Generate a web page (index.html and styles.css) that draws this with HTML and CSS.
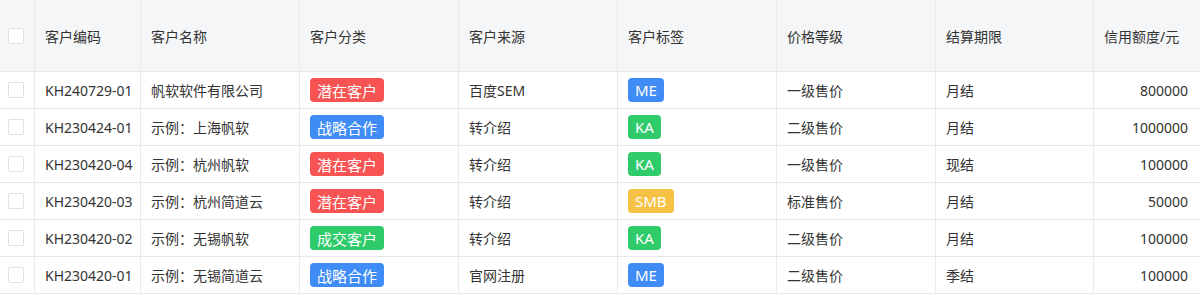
FILE: index.html
```html
<!DOCTYPE html>
<html lang="zh-CN">
<head>
<meta charset="utf-8">
<title>客户列表</title>
<link rel="stylesheet" href="styles.css">
</head>
<body>
<div class="table">
  <div class="row head">
    <div class="cell check"><span class="box"></span></div>
    <div class="cell">客户编码</div>
    <div class="cell">客户名称</div>
    <div class="cell">客户分类</div>
    <div class="cell">客户来源</div>
    <div class="cell">客户标签</div>
    <div class="cell">价格等级</div>
    <div class="cell">结算期限</div>
    <div class="cell num">信用额度/元</div>
  </div>
  <div class="row">
    <div class="cell check"><span class="box"></span></div>
    <div class="cell">KH240729-01</div>
    <div class="cell">帆软软件有限公司</div>
    <div class="cell"><span class="tag red">潜在客户</span></div>
    <div class="cell">百度SEM</div>
    <div class="cell"><span class="tag blue">ME</span></div>
    <div class="cell">一级售价</div>
    <div class="cell">月结</div>
    <div class="cell num right">800000</div>
  </div>
  <div class="row">
    <div class="cell check"><span class="box"></span></div>
    <div class="cell">KH230424-01</div>
    <div class="cell">示例：上海帆软</div>
    <div class="cell"><span class="tag blue">战略合作</span></div>
    <div class="cell">转介绍</div>
    <div class="cell"><span class="tag green">KA</span></div>
    <div class="cell">二级售价</div>
    <div class="cell">月结</div>
    <div class="cell num right">1000000</div>
  </div>
  <div class="row">
    <div class="cell check"><span class="box"></span></div>
    <div class="cell">KH230420-04</div>
    <div class="cell">示例：杭州帆软</div>
    <div class="cell"><span class="tag red">潜在客户</span></div>
    <div class="cell">转介绍</div>
    <div class="cell"><span class="tag green">KA</span></div>
    <div class="cell">一级售价</div>
    <div class="cell">现结</div>
    <div class="cell num right">100000</div>
  </div>
  <div class="row">
    <div class="cell check"><span class="box"></span></div>
    <div class="cell">KH230420-03</div>
    <div class="cell">示例：杭州简道云</div>
    <div class="cell"><span class="tag red">潜在客户</span></div>
    <div class="cell">转介绍</div>
    <div class="cell"><span class="tag yellow">SMB</span></div>
    <div class="cell">标准售价</div>
    <div class="cell">月结</div>
    <div class="cell num right">50000</div>
  </div>
  <div class="row">
    <div class="cell check"><span class="box"></span></div>
    <div class="cell">KH230420-02</div>
    <div class="cell">示例：无锡帆软</div>
    <div class="cell"><span class="tag green">成交客户</span></div>
    <div class="cell">转介绍</div>
    <div class="cell"><span class="tag green">KA</span></div>
    <div class="cell">二级售价</div>
    <div class="cell">月结</div>
    <div class="cell num right">100000</div>
  </div>
  <div class="row">
    <div class="cell check"><span class="box"></span></div>
    <div class="cell">KH230420-01</div>
    <div class="cell">示例：无锡简道云</div>
    <div class="cell"><span class="tag blue">战略合作</span></div>
    <div class="cell">官网注册</div>
    <div class="cell"><span class="tag blue">ME</span></div>
    <div class="cell">二级售价</div>
    <div class="cell">季结</div>
    <div class="cell num right">100000</div>
  </div>
</div>
</body>
</html>
```

FILE: styles.css
```css
html, body {
  margin: 0;
  padding: 0;
  background: #ffffff;
}
body {
  font-family: "Noto Sans", "Noto Sans CJK SC", sans-serif;
  font-size: 14px;
  color: #333333;
}
.table {
  width: 1200px;
}
.row {
  display: grid;
  grid-template-columns: 35px 106px 159px 159px 159px 159px 159px 158px 106px;
  height: 37px;
  border-bottom: 1px solid #e8e9eb;
  box-sizing: border-box;
}
.row.head {
  height: 72px;
  background: #f5f6f8;
}
.cell {
  display: flex;
  align-items: center;
  padding: 0 10px;
  border-right: 1px solid #e8e9eb;
  box-sizing: border-box;
  white-space: nowrap;
  overflow: hidden;
}
.cell:last-child {
  border-right: none;
}
.cell.check {
  padding: 0 0 0 8px;
}
.cell.right {
  justify-content: flex-end;
  padding-right: 12px;
}
.box {
  width: 16px;
  height: 16px;
  box-sizing: border-box;
  border: 1px solid #dfe1e5;
  border-radius: 2px;
  background: #ffffff;
}
.tag {
  display: inline-flex;
  align-items: center;
  height: 24px;
  padding: 0 7px;
  border-radius: 4px;
  color: #ffffff;
  font-size: 15px;
}
.tag.red { background: #f65352; }
.tag.blue { background: #3f8cf7; }
.tag.green { background: #2fcb6b; }
.tag.yellow { background: #f6c244; }
```
